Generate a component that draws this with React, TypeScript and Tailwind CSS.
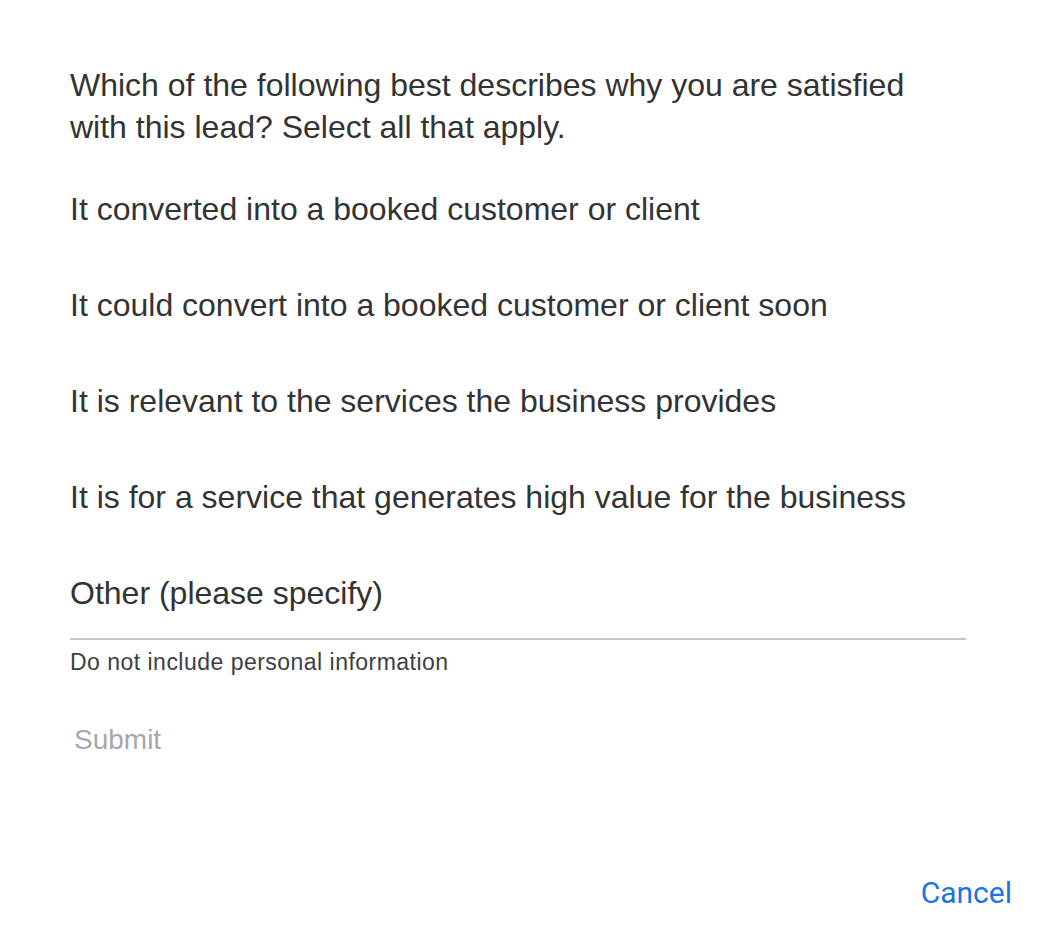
const options = [
  'It converted into a booked customer or client',
  'It could convert into a booked customer or client soon',
  'It is relevant to the services the business provides',
  'It is for a service that generates high value for the business',
];

export default function App() {
  return (
    <div className="w-[1038px] h-[936px] bg-white text-[#333333] font-['Liberation_Sans',Arial,sans-serif] flex flex-col">
      <div className="pl-[70px] pr-[72px] pt-[64px]">
        <p className="text-[32px] leading-[42px] w-[870px]">
          Which of the following best describes why you are satisfied with this lead? Select all that apply.
        </p>
        <div className="mt-[40px] flex flex-col">
          {options.map((o) => (
            <div key={o} className="h-[96px] text-[32px] leading-[42px]">
              {o}
            </div>
          ))}
          <div className="text-[32px] leading-[42px]">Other (please specify)</div>
        </div>
        <div className="mt-[24px] h-[2px] w-[896px] bg-[#c6c6c6]" />
        <p className="mt-[10px] text-[23px] leading-[24px] tracking-[0.48px] text-[#3c4043]">Do not include personal information</p>
        <button className="mt-[50px] ml-[4px] text-[28px] leading-[32px] text-[#a8a8a8]">Submit</button>
      </div>
      <div className="mt-auto flex justify-end pr-[26px] pb-[25px]">
        <button className="text-[30px] leading-[36px] text-[#1a73e8] font-['Roboto',sans-serif]">Cancel</button>
      </div>
    </div>
  );
}
